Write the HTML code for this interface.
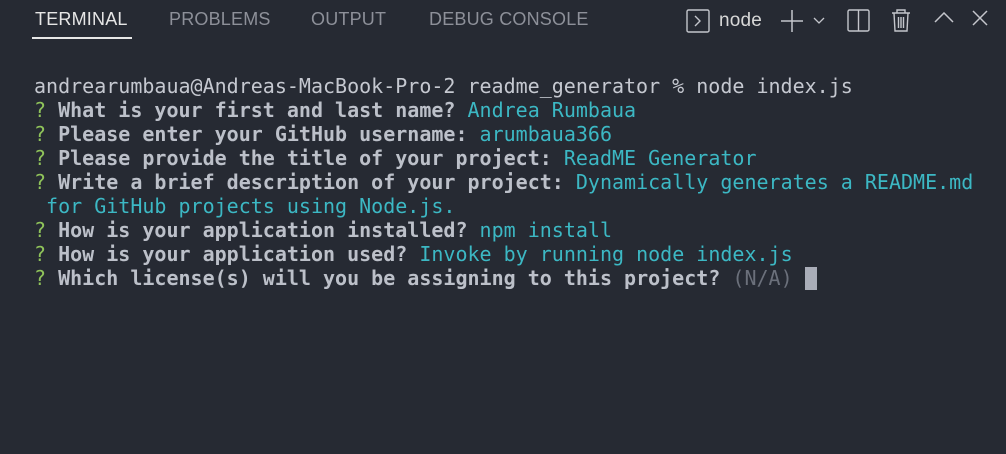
<!DOCTYPE html>
<html><head><meta charset="utf-8"><style>
html,body{margin:0;padding:0;background:#262a33;width:1006px;height:454px;overflow:hidden}
.tabs{position:absolute;top:0;left:0;height:44px;width:1006px;font-family:"Liberation Sans",sans-serif;font-size:18px;letter-spacing:0.2px}
.tab{position:absolute;top:9px;color:#8d9099}
.tab.act{color:#e6e6e6}
.ul{position:absolute;left:32px;top:37px;width:100px;height:2px;background:#e6e6e6}
.term{position:absolute;left:34px;top:74px;font-family:"DejaVu Sans Mono","Liberation Mono",monospace;font-size:20px;line-height:24px;color:#c5c8d0;white-space:pre}
.g{color:#8fc35a}.b{font-weight:bold;color:#bcc0c9}.c{color:#3cb8c4}.d{color:#6b707b}
.cur{display:inline-block;width:12px;height:23px;background:#a9adb8;vertical-align:-5px}
svg{position:absolute}
</style></head><body>
<div class="tabs">
<span class="tab act" style="left:35px">TERMINAL</span>
<span class="tab" style="left:169px">PROBLEMS</span>
<span class="tab" style="left:311px">OUTPUT</span>
<span class="tab" style="left:429px">DEBUG CONSOLE</span>
<div class="ul"></div>
<svg style="left:686px;top:9px" width="24" height="24" viewBox="0 0 24 24" fill="none" stroke="#c4c6cc" stroke-width="1.4"><rect x="1" y="1" width="22" height="22" rx="1.5"/><path d="M9 7l5 5-5 5"/></svg>
<span style="position:absolute;left:719px;top:10px;color:#d8d8d8;font-size:19px">node</span>
<svg style="left:780px;top:10px" width="24" height="22" viewBox="0 0 24 22" fill="none" stroke="#c4c6cc" stroke-width="1.5"><path d="M1 11h22M12 0v22"/></svg>
<svg style="left:813px;top:15px" width="12" height="10" viewBox="0 0 12 10" fill="none" stroke="#c4c6cc" stroke-width="1.3"><path d="M1 3l5 5 5-5"/></svg>
<svg style="left:847px;top:9px" width="24" height="24" viewBox="0 0 24 24" fill="none" stroke="#c4c6cc" stroke-width="1.4"><rect x="1" y="1" width="21" height="21" rx="1.5"/><path d="M11.5 1v21"/></svg>
<svg style="left:890px;top:8px" width="22" height="24" viewBox="0 0 22 24" fill="none" stroke="#c4c6cc" stroke-width="1.4"><path d="M2 5h18M7 5V2h8v3M4 5l1 18h12l1-18M8.5 9v11M11 9v11M13.5 9v11"/></svg>
<svg style="left:934px;top:12px" width="20" height="12" viewBox="0 0 20 12" fill="none" stroke="#c4c6cc" stroke-width="1.5"><path d="M1 10l9-9 9 9"/></svg>
<svg style="left:971px;top:9px" width="18" height="18" viewBox="0 0 18 18" fill="none" stroke="#c4c6cc" stroke-width="1.5"><path d="M2 2l14 14M16 2L2 16"/></svg>
</div>
<div class="term">andrearumbaua@Andreas-MacBook-Pro-2 readme_generator % node index.js
<span class="g">?</span> <span class="b">What is your first and last name?</span> <span class="c">Andrea Rumbaua</span>
<span class="g">?</span> <span class="b">Please enter your GitHub username:</span> <span class="c">arumbaua366</span>
<span class="g">?</span> <span class="b">Please provide the title of your project:</span> <span class="c">ReadME Generator</span>
<span class="g">?</span> <span class="b">Write a brief description of your project:</span> <span class="c">Dynamically generates a README.md</span>
<span class="c"> for GitHub projects using Node.js.</span>
<span class="g">?</span> <span class="b">How is your application installed?</span> <span class="c">npm install</span>
<span class="g">?</span> <span class="b">How is your application used?</span> <span class="c">Invoke by running node index.js</span>
<span class="g">?</span> <span class="b">Which license(s) will you be assigning to this project?</span> <span class="d">(N/A)</span> <span class="cur"></span></div>
</body></html>
